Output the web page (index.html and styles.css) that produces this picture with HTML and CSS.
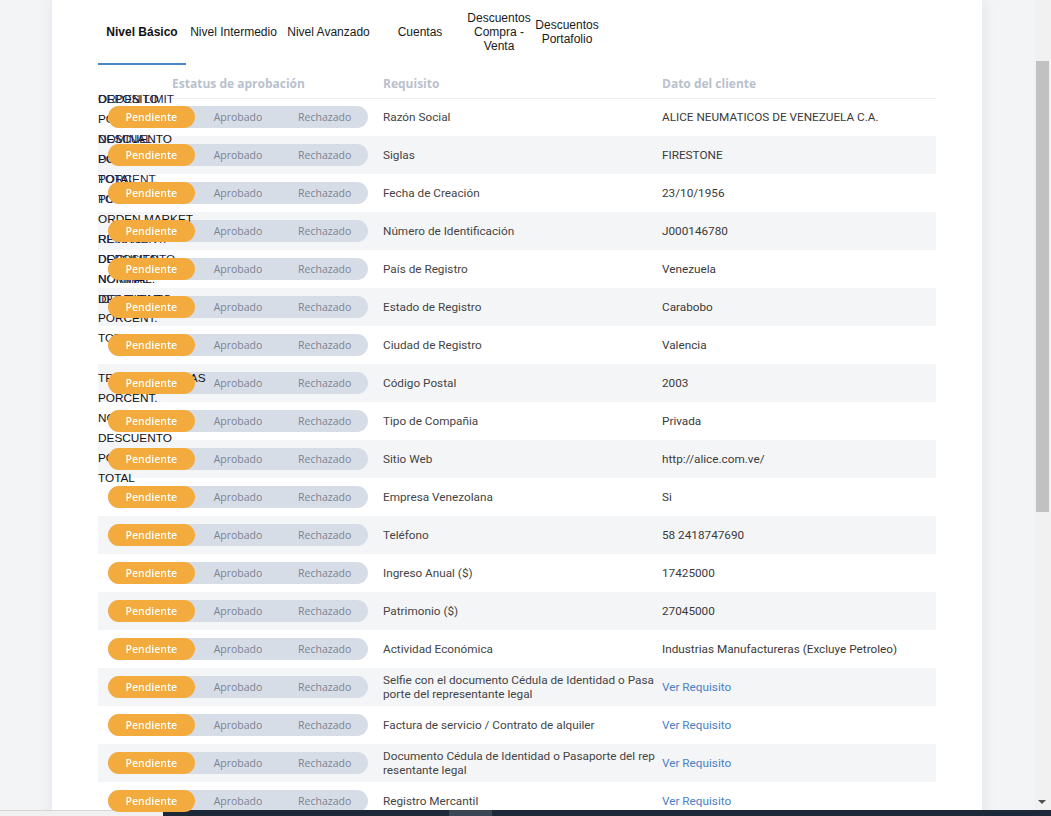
FILE: index.html
```html
<!DOCTYPE html>
<html lang="es">
<head>
  <meta charset="UTF-8">
  <meta name="viewport" content="width=device-width, initial-scale=1.0">
  <title>Requisitos del cliente</title>
  <link rel="stylesheet" href="styles.css">
</head>
<body>
  <div class="page">
    <div class="card">
      <nav class="tabs">
        <a class="tab active" style="width: 88px">Nivel Básico</a>
        <a class="tab" style="width: 95px">Nivel Intermedio</a>
        <a class="tab" style="width: 95px">Nivel Avanzado</a>
        <a class="tab" style="width: 88px">Cuentas</a>
        <a class="tab" style="width: 70px">Descuentos Compra - Venta</a>
        <a class="tab" style="width: 66px">Descuentos Portafolio</a>
      </nav>

      <div class="table-wrap">
        <!-- texto desbordado de otra pestaña, queda encima de las filas -->
        <div class="ghost ghost-a">DEPOSITO<br>PORCENT.<br>DESCUENTO<br>PORCENT.<br>TOTAL<br>TOTAL<br>ORDEN MARKET<br>RETIRO<br>DEPOSITO<br>NOMINAL.<br>DESCUENTO<br>PORCENT.<br>TOTAL<br><br>TRANSFERENCIAS<br>PORCENT.<br>NOMINAL<br>DESCUENTO<br>PORCENT.<br>TOTAL</div>
        <div class="ghost ghost-b">ORDEN LIMIT<br><br>NOMINAL<br>DOCUMENTO<br>PORCENT.<br>PORCENT.<br><br>REMANENT.<br>DOCUMENTO<br>NORMAL.<br>IDENTIDAD</div>

        <table class="reqs">
          <colgroup>
            <col class="c-status">
            <col class="c-req">
            <col class="c-data">
          </colgroup>
          <thead>
            <tr>
              <th class="th-status">Estatus de aprobación</th>
              <th>Requisito</th>
              <th>Dato del cliente</th>
            </tr>
          </thead>
          <tbody id="rows"></tbody>
        </table>
      </div>
    </div>
  </div>

  <div class="vscroll">
    <div class="thumb"></div>
    <span class="arrow"></span>
  </div>
  <div class="taskbar">
    <div class="tb-left"></div>
    <div class="tb-dark"><span class="tb-item"></span></div>
  </div>

  <script>
    const rows = [
      ['Razón Social', 'ALICE NEUMATICOS DE VENEZUELA C.A.'],
      ['Siglas', 'FIRESTONE'],
      ['Fecha de Creación', '23/10/1956'],
      ['Número de Identificación', 'J000146780'],
      ['País de Registro', 'Venezuela'],
      ['Estado de Registro', 'Carabobo'],
      ['Ciudad de Registro', 'Valencia'],
      ['Código Postal', '2003'],
      ['Tipo de Compañia', 'Privada'],
      ['Sitio Web', 'http://alice.com.ve/'],
      ['Empresa Venezolana', 'Si'],
      ['Teléfono', '58 2418747690'],
      ['Ingreso Anual ($)', '17425000'],
      ['Patrimonio ($)', '27045000'],
      ['Actividad Económica', 'Industrias Manufactureras (Excluye Petroleo)'],
      ['Selfie con el documento Cédula de Identidad o Pasaporte del representante legal', null],
      ['Factura de servicio / Contrato de alquiler', null],
      ['Documento Cédula de Identidad o Pasaporte del representante legal', null],
      ['Registro Mercantil', null],
      ['Acta Constitutiva', null],
      ['RIF', null]
    ];

    const tbody = document.querySelector('#rows');
    rows.forEach(([req, data]) => {
      const tr = document.createElement('tr');
      const value = data === null
        ? '<a class="link" href="#">Ver Requisito</a>'
        : data;
      tr.innerHTML = `
        <td>
          <div class="status">
            <span class="opt active">Pendiente</span>
            <span class="opt">Aprobado</span>
            <span class="opt">Rechazado</span>
          </div>
        </td>
        <td class="req">${req}</td>
        <td class="data">${value}</td>`;
      tbody.appendChild(tr);
    });
  </script>
</body>
</html>
```

FILE: styles.css
```css
/* reset */
*,
*::before,
*::after {
  box-sizing: border-box;
}
html,
body {
  margin: 0;
  height: 100%;
  overflow: hidden;
}
body {
  background: #f3f4f6;
  font-family: Roboto, "Liberation Sans", sans-serif;
}

/* layout */
.page {
  width: calc(100% - 17px);
  height: 100%;
}
.card {
  width: 930px;
  min-height: 100%;
  margin: 0 auto;
  padding: 0 46px;
  background: #fff;
  box-shadow: 0 0 14px rgba(30, 40, 60, 0.08);
}

/* tabs */
.tabs {
  display: flex;
  height: 65px;
}
.tab {
  display: flex;
  align-items: center;
  justify-content: center;
  text-align: center;
  font-family: "Liberation Sans", Arial, sans-serif;
  font-size: 12px;
  line-height: 14px;
  color: #1a1a1a;
  border-bottom: 2px solid transparent;
  cursor: pointer;
}
.tab.active {
  font-weight: bold;
  color: #111;
  border-bottom-color: #4a86c8;
}

/* table */
.table-wrap {
  position: relative;
  padding-top: 5px;
}
.reqs {
  width: 838px;
  border-collapse: collapse;
  table-layout: fixed;
}
.c-status {
  width: 280px;
}
.c-req,
.c-data {
  width: 279px;
}
.reqs th {
  height: 28px;
  padding: 0 4px 0 5px;
  text-align: left;
  font-family: "Open Sans", sans-serif;
  font-size: 12px;
  font-weight: 700;
  color: #b9c1cc;
  border-bottom: 1px solid #eef0f3;
}
.reqs th.th-status {
  text-align: center;
}
.reqs td {
  height: 38px;
  padding: 0 2px 0 5px;
  font-size: 11.75px;
  line-height: 14px;
  color: #444;
  word-break: break-all;
}
.reqs td:first-child {
  padding: 0;
}
.reqs tbody tr:nth-child(even) {
  background: #f4f5f7;
}
.reqs td.data {
  color: #3a3a3a;
}
.link {
  color: #4a80c4;
  text-decoration: none;
}

/* status switch */
.status {
  display: flex;
  width: 260px;
  height: 22px;
  margin: 0 auto;
  border-radius: 11px;
  background: #d7dde6;
}
.opt {
  flex: 1;
  display: flex;
  align-items: center;
  justify-content: center;
  font-family: "Open Sans", sans-serif;
  font-size: 10.5px;
  color: #7b8394;
}
.opt.active {
  position: relative;
  z-index: 2;
  border-radius: 11px;
  background: #f4ab3e;
  color: #fff;
  font-weight: 600;
}

/* overflowed labels */
.ghost {
  position: absolute;
  top: 25px;
  left: 0;
  z-index: 1;
  font-family: "Liberation Sans", Arial, sans-serif;
  font-size: 11.8px;
  line-height: 19.95px;
  white-space: nowrap;
  pointer-events: none;
}
.ghost-a {
  color: #111;
}
.ghost-b {
  color: #1d1f4f;
}

/* window chrome */
.vscroll {
  position: fixed;
  top: 0;
  right: 0;
  bottom: 0;
  width: 17px;
  background: #f1f1f1;
}
.thumb {
  position: absolute;
  top: 61px;
  left: 2px;
  width: 13px;
  height: 451px;
  background: #c1c1c1;
}
.arrow {
  position: absolute;
  left: 4px;
  bottom: 12px;
  border-left: 4px solid transparent;
  border-right: 4px solid transparent;
  border-top: 4px solid #505050;
}
.taskbar {
  position: fixed;
  left: 0;
  right: 0;
  bottom: 0;
  height: 6px;
  display: flex;
}
.tb-left {
  width: 163px;
  background: #f0f0f0;
  border-top: 1px solid #d6d6d6;
}
.tb-dark {
  flex: 1;
  position: relative;
  background: #1d2939;
}
.tb-item {
  position: absolute;
  left: 286px;
  top: 0;
  width: 43px;
  height: 100%;
  background: #3b4654;
}
```
